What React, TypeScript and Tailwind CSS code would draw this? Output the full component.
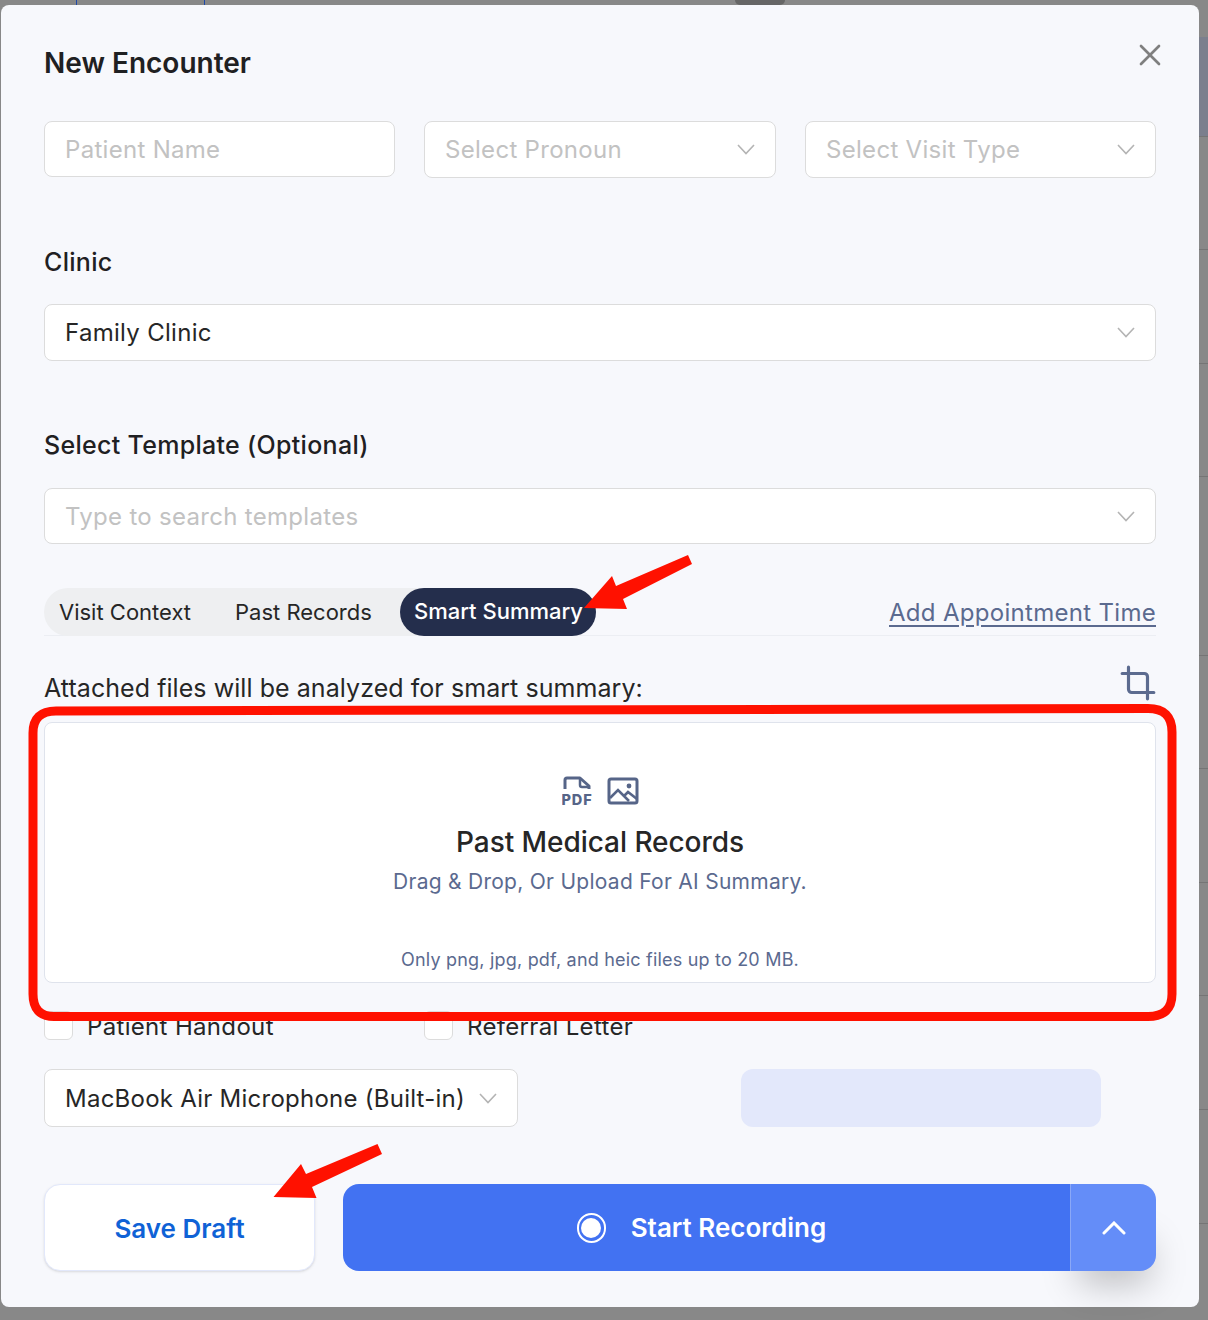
import { Crop, X } from "lucide-react";

const font = { fontFamily: "Inter, 'Liberation Sans', sans-serif" };

// table row lines of the page behind the dialog, seen in the strip on the right
const backdropLines = [136, 249, 363, 476, 655, 768, 882, 995, 1109, 1223];

function Chevron({ className = "text-[#b4b4b4]" }: { className?: string }) {
  return (
    <svg width="18" height="11" viewBox="0 0 18 11" fill="none" className={className}>
      <path d="M1 1l8 8.5L17 1" stroke="currentColor" strokeWidth="1.6" />
    </svg>
  );
}

function SelectBox({
  label,
  placeholder,
  className = "",
}: {
  label: string;
  placeholder?: boolean;
  className?: string;
}) {
  return (
    <div
      className={`flex items-center justify-between rounded-lg border border-[#dcdcdc] bg-white pl-5 pr-[20px] text-[24px] tracking-[0.3px] ${
        placeholder ? "text-[#c2c2c2]" : "text-[#262626]"
      } ${className}`}
    >
      <span>{label}</span>
      <Chevron />
    </div>
  );
}

function Check({ label, className = "" }: { label: string; className?: string }) {
  return (
    <div className={`flex h-[29px] items-center gap-[14px] ${className}`}>
      <span className="h-[29px] w-[29px] rounded-md border border-[#dcdcdc] bg-white" />
      <span className="mt-[2px] text-[24px] tracking-[0.33px] text-[#262626]">{label}</span>
    </div>
  );
}

function Annotations() {
  return (
    <svg width="1208" height="1320" className="pointer-events-none absolute left-0 top-0">
      <polygon
        points="688,555 692,564 623,599 627,609 584,608 612,576 616,586"
        fill="#ff1100"
      />
      <polygon
        points="377.5,1144 382,1154 312,1187 316.5,1198 273.5,1197 301,1164 306,1174"
        fill="#ff1100"
      />
      <path
        d="M56 711 L1148 708.5 Q1172 708.5 1172 732 L1172 994 Q1172 1016.5 1148 1016.5 L54 1016.5 Q33 1016.5 33 994 L33 733 Q33 711 56 711 Z"
        fill="none"
        stroke="#ff1100"
        strokeWidth="9"
      />
    </svg>
  );
}

export default function App() {
  return (
    <div style={font} className="relative h-[1320px] w-[1208px] overflow-hidden bg-[#888888]">
      {/* page behind the dialog */}
      <div className="absolute left-[76px] top-0 h-[5px] w-[129px] border-x border-[#1f4aa8]" />
      <div className="absolute left-[735px] top-0 h-[5px] w-[50px] rounded-b-full bg-[#666666]" />
      <div className="absolute right-0 top-[37px] h-[99px] w-[9px] bg-[#7b7f8d]" />
      {backdropLines.map((y) => (
        <div
          key={y}
          className="absolute right-0 h-px w-[9px] bg-[#757575]"
          style={{ top: y }}
        />
      ))}

      <div className="absolute left-px top-[5px] h-[1302px] w-[1198px] rounded-lg bg-[#f7f8fc] px-[43px]">
        <div className="flex h-[116px] items-start justify-between">
          <h1 className="mt-[39px] text-[28px] font-semibold leading-[38px] text-[#1f2022]">
            New Encounter
          </h1>
          <X size={36} strokeWidth={1.8} className="mr-[-12px] mt-[32px] text-[#7f7f7f]" />
        </div>

        <div className="flex items-start gap-[29px]">
          <div className="flex h-[56px] w-[351px] items-center rounded-lg border border-[#dcdcdc] bg-white pl-5 pt-[1px] text-[24px] tracking-[0.3px] text-[#c2c2c2]">
            Patient Name
          </div>
          <SelectBox label="Select Pronoun" placeholder className="h-[57px] w-[352px]" />
          <SelectBox label="Select Visit Type" placeholder className="h-[57px] w-[351px]" />
        </div>

        <div className="mt-[66px] text-[25px] font-medium leading-[36px] tracking-[0.3px] text-[#1f2022]">
          Clinic
        </div>
        <SelectBox label="Family Clinic" className="mt-[24px] h-[57px]" />

        <div className="mt-[66px] text-[25px] font-medium leading-[36px] tracking-[0.3px] text-[#1f2022]">
          Select Template (Optional)
        </div>
        <SelectBox label="Type to search templates" placeholder className="mt-[25px] h-[56px] pt-[1px]" />

        <div className="mt-[44px] flex h-[48px] items-center justify-between border-b border-[#eceef3]">
          <div className="flex h-[48px] items-center rounded-full bg-[#eeeff1] pl-[15px] text-[22px] text-[#262626]">
            <span className="mt-[1px] w-[176px]">Visit Context</span>
            <span className="mt-[1px] w-[165px]">Past Records</span>
            <span className="flex h-[48px] w-[196px] items-center justify-center rounded-full bg-[#242e4c] pl-[1px] font-medium text-white">
              Smart Summary
            </span>
          </div>
          <span className="mt-[2px] text-[24px] tracking-[0.3px] text-[#5b6a8f] underline underline-offset-4">
            Add Appointment Time
          </span>
        </div>

        <div className="mt-[30px] flex h-[56px] items-start justify-between">
          <span className="mt-[4px] text-[25px] leading-[36px] tracking-[0.06px] text-[#262626]">
            Attached files will be analyzed for smart summary:
          </span>
          <Crop size={38} strokeWidth={2} className="-mr-[1px] -mt-[2px] text-[#5c6b8f]" />
        </div>

        <div className="flex h-[261px] flex-col items-center rounded-lg border border-[#dfe3ec] bg-white">
          <div className="mt-[52px] flex h-[32px] items-center gap-[15px] pl-[1px] text-[#566588]">
            <svg width="30" height="30" viewBox="0 0 30 30" fill="none">
              <path
                d="M3 13V4a2 2 0 0 1 2-2h13l9 8v3"
                stroke="currentColor"
                strokeWidth="3"
                strokeLinejoin="round"
              />
              <path d="M18 3v6a2 2 0 0 0 2 2h6" stroke="currentColor" strokeWidth="2.5" />
              <text
                x="15"
                y="28.5"
                textAnchor="middle"
                fontSize="14.5"
                fontWeight="800"
                letterSpacing="0.9"
                fill="currentColor"
              >
                PDF
              </text>
            </svg>
            <svg width="32" height="28" viewBox="0 0 32 28" fill="none">
              <rect
                x="2"
                y="2"
                width="28"
                height="24"
                rx="2"
                stroke="currentColor"
                strokeWidth="3"
              />
              <path
                d="M3 21l8-8 11 11M17 19l4-4 9 7"
                stroke="currentColor"
                strokeWidth="2.6"
              />
              <circle cx="22" cy="9" r="2.4" fill="currentColor" />
            </svg>
          </div>
          <div className="mt-[15px] text-[28px] font-medium leading-[40px] tracking-[-0.05px] text-[#262626]">
            Past Medical Records
          </div>
          <div className="mt-[5px] text-[21px] leading-[30px] tracking-[0.27px] text-[#5b6a8f]">
            Drag &amp; Drop, Or Upload For AI Summary.
          </div>
          <div className="mt-[50px] text-[18px] leading-[26px] tracking-[0.2px] text-[#5b6a8f]">
            Only png, jpg, pdf, and heic files up to 20 MB.
          </div>
        </div>

        <div className="mt-[28px] flex">
          <Check label="Patient Handout" className="w-[380px]" />
          <Check label="Referral Letter" />
        </div>

        <div className="mt-[29px] flex items-center">
          <div className="flex h-[58px] w-[474px] items-center justify-between rounded-lg border border-[#dcdcdc] bg-white pl-5 pr-[20px] pt-[1px] text-[24px] tracking-[0.25px] text-[#262626]">
            <span className="whitespace-nowrap">MacBook Air Microphone (Built-in)</span>
            <Chevron />
          </div>
          <div className="ml-[223px] h-[58px] w-[360px] rounded-xl bg-[#e3e8fb]" />
        </div>

        <div className="absolute bottom-[40px] right-[50px] h-[40px] w-[70px] shadow-[0_16px_36px_rgba(0,0,0,0.25)]" />
        <div className="relative mt-[57px] flex gap-[28px]">
          <div className="flex h-[87px] w-[271px] items-center justify-center rounded-2xl border border-[#e2e8fb] bg-white pt-[1px] text-[26px] font-semibold text-[#0f62d6] shadow-sm">
            Save Draft
          </div>
          <div className="flex h-[87px] w-[813px] overflow-hidden rounded-2xl">
            <div className="flex w-[727px] items-center justify-center gap-[25px] bg-[#4272f2] pr-[10px] text-[26px] font-semibold text-white">
              <span className="flex h-[30px] w-[29px] items-center justify-center rounded-full border-2 border-white">
                <span className="h-[20px] w-[20px] rounded-full bg-white" />
              </span>
              Start Recording
            </div>
            <div className="flex w-[86px] items-center justify-center border-l border-[#8aa8f7] bg-[#648df8] text-white">
              <svg width="24" height="14" viewBox="0 0 24 14" fill="none">
                <path d="M2 12L12 2l10 10" stroke="currentColor" strokeWidth="3" strokeLinecap="round" />
              </svg>
            </div>
          </div>
        </div>
      </div>

      <Annotations />
    </div>
  );
}
